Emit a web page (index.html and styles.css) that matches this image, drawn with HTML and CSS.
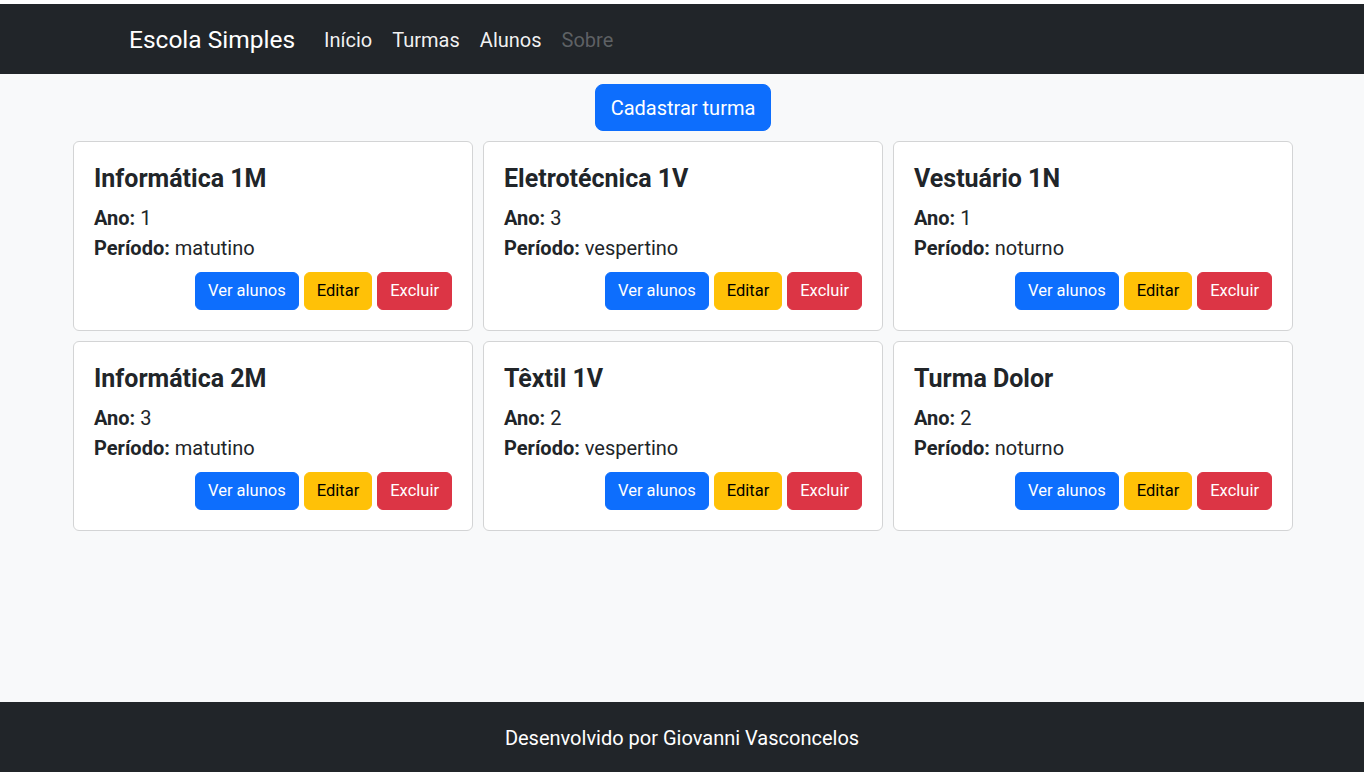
FILE: index.html
```html
<!DOCTYPE html>
<html lang="pt-BR">
<head>
<meta charset="utf-8">
<title>Escola Simples - Turmas</title>
<link rel="stylesheet" href="styles.css">
</head>
<body>
<div class="page">
  <nav class="navbar">
    <div class="container nav-inner">
      <a class="brand" href="#">Escola Simples</a>
      <ul class="nav-links">
        <li><a class="nav-link" href="#">Início</a></li>
        <li><a class="nav-link" href="#">Turmas</a></li>
        <li><a class="nav-link" href="#">Alunos</a></li>
        <li><a class="nav-link disabled" href="#">Sobre</a></li>
      </ul>
    </div>
  </nav>

  <main class="main">
    <div class="actions">
      <a class="btn btn-lg btn-primary" href="#">Cadastrar turma</a>
    </div>
    <div class="cards">
      <div class="card">
        <h4 class="card-title">Informática 1M</h4>
        <p class="card-line"><strong>Ano:</strong> 1</p>
        <p class="card-line"><strong>Período:</strong> matutino</p>
        <div class="card-buttons">
          <a class="btn btn-primary" href="#">Ver alunos</a>
          <a class="btn btn-warning" href="#">Editar</a>
          <a class="btn btn-danger" href="#">Excluir</a>
        </div>
      </div>
      <div class="card">
        <h4 class="card-title">Eletrotécnica 1V</h4>
        <p class="card-line"><strong>Ano:</strong> 3</p>
        <p class="card-line"><strong>Período:</strong> vespertino</p>
        <div class="card-buttons">
          <a class="btn btn-primary" href="#">Ver alunos</a>
          <a class="btn btn-warning" href="#">Editar</a>
          <a class="btn btn-danger" href="#">Excluir</a>
        </div>
      </div>
      <div class="card">
        <h4 class="card-title">Vestuário 1N</h4>
        <p class="card-line"><strong>Ano:</strong> 1</p>
        <p class="card-line"><strong>Período:</strong> noturno</p>
        <div class="card-buttons">
          <a class="btn btn-primary" href="#">Ver alunos</a>
          <a class="btn btn-warning" href="#">Editar</a>
          <a class="btn btn-danger" href="#">Excluir</a>
        </div>
      </div>
      <div class="card">
        <h4 class="card-title">Informática 2M</h4>
        <p class="card-line"><strong>Ano:</strong> 3</p>
        <p class="card-line"><strong>Período:</strong> matutino</p>
        <div class="card-buttons">
          <a class="btn btn-primary" href="#">Ver alunos</a>
          <a class="btn btn-warning" href="#">Editar</a>
          <a class="btn btn-danger" href="#">Excluir</a>
        </div>
      </div>
      <div class="card">
        <h4 class="card-title">Têxtil 1V</h4>
        <p class="card-line"><strong>Ano:</strong> 2</p>
        <p class="card-line"><strong>Período:</strong> vespertino</p>
        <div class="card-buttons">
          <a class="btn btn-primary" href="#">Ver alunos</a>
          <a class="btn btn-warning" href="#">Editar</a>
          <a class="btn btn-danger" href="#">Excluir</a>
        </div>
      </div>
      <div class="card">
        <h4 class="card-title">Turma Dolor</h4>
        <p class="card-line"><strong>Ano:</strong> 2</p>
        <p class="card-line"><strong>Período:</strong> noturno</p>
        <div class="card-buttons">
          <a class="btn btn-primary" href="#">Ver alunos</a>
          <a class="btn btn-warning" href="#">Editar</a>
          <a class="btn btn-danger" href="#">Excluir</a>
        </div>
      </div>
    </div>
  </main>

  <footer class="footer">
    <p class="footer-text">Desenvolvido por Giovanni Vasconcelos</p>
  </footer>
</div>
</body>
</html>
```

FILE: styles.css
```css
* {
  box-sizing: border-box;
}

html {
  background: #ffffff;
}

body {
  margin: 4px 3px 0 0;
  font-family: Roboto, "Noto Sans", sans-serif;
  font-size: 20px;
  line-height: 1.5;
  color: #212529;
}

.page {
  min-height: 768px;
  display: flex;
  flex-direction: column;
  background: #f8f9fa;
}

a {
  text-decoration: none;
}

/* Navbar */
.navbar {
  background: #212529;
  height: 70px;
  padding-top: 2px;
  display: flex;
  align-items: center;
}

.container {
  width: 1140px;
  margin: 0 auto;
  padding: 0 12px 0 17px;
}

.nav-inner {
  display: flex;
  align-items: center;
}

.brand {
  color: #ffffff;
  font-size: 24.5px;
  line-height: 36px;
  margin-right: 19px;
}

.nav-links {
  list-style: none;
  margin: 0;
  padding: 0;
  display: flex;
}

.nav-link {
  display: block;
  padding: 0 10px;
  color: rgba(255, 255, 255, 0.95);
  font-size: 20px;
  line-height: 30px;
}

.nav-link.disabled {
  color: rgba(255, 255, 255, 0.28);
}

/* Main */
.main {
  flex: 1;
  padding: 10px 0 0 2px;
}

.actions {
  display: flex;
  justify-content: center;
  margin-bottom: 10px;
}

.cards {
  display: grid;
  grid-template-columns: repeat(3, 400px);
  gap: 10px;
  justify-content: center;
}

.card {
  background: #ffffff;
  border: 1px solid #d3d4d5;
  border-radius: 6px;
  padding: 20px;
  height: 190px;
  display: flex;
  flex-direction: column;
}

.card-title {
  margin: 2px 0 10px;
  font-size: 25px;
  line-height: 29px;
  font-weight: 700;
}

.card-line {
  margin: 0;
  line-height: 30px;
}

.card-line strong {
  font-weight: 700;
}

.card-buttons {
  margin-top: 9px;
  display: flex;
  justify-content: flex-end;
  gap: 5px;
}

/* Buttons */
.btn {
  display: inline-block;
  font-size: 16.5px;
  line-height: 24px;
  padding: 6px 12px;
  border: 1px solid transparent;
  border-radius: 6px;
}

.btn-lg {
  font-size: 20px;
  line-height: 30px;
  padding: 8px 15px 7px;
  border-radius: 8px;
}

.btn-primary {
  background: #0d6efd;
  border-color: #0d6efd;
  color: #ffffff;
}

.btn-warning {
  background: #ffc107;
  border-color: #ffc107;
  color: #000000;
}

.btn-danger {
  background: #dc3545;
  border-color: #dc3545;
  color: #ffffff;
}

/* Footer */
.footer {
  background: #212529;
  height: 70px;
  padding-top: 2px;
  display: flex;
  align-items: center;
  justify-content: center;
}

.footer-text {
  margin: 0;
  color: #ffffff;
  font-size: 20px;
  line-height: 30px;
}
```
